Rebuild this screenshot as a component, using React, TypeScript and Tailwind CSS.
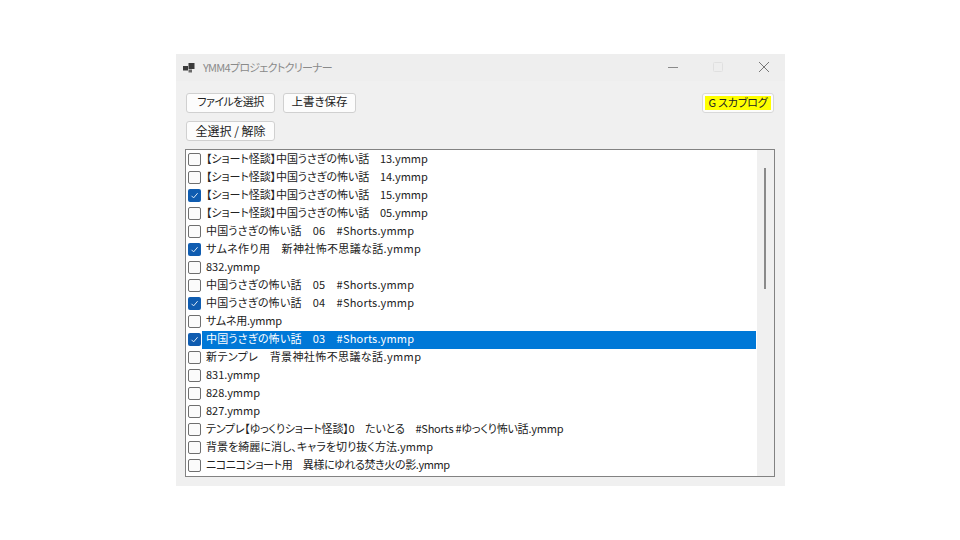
const rows: [string, boolean, string, boolean?][] = [
  ["【ショート怪談】中国うさぎの怖い話　13.ymmp", false, "tracking-[-0.08px]"],
  ["【ショート怪談】中国うさぎの怖い話　14.ymmp", false, "tracking-[-0.08px]"],
  ["【ショート怪談】中国うさぎの怖い話　15.ymmp", true, "tracking-[-0.08px]"],
  ["【ショート怪談】中国うさぎの怖い話　05.ymmp", false, "tracking-[-0.08px]"],
  ["中国うさぎの怖い話　06　#Shorts.ymmp", false, "tracking-[0.2px]"],
  ["サムネ作り用　新神社怖不思議な話.ymmp", true, "tracking-[0.35px]"],
  ["832.ymmp", false, "tracking-normal"],
  ["中国うさぎの怖い話　05　#Shorts.ymmp", false, "tracking-[0.2px]"],
  ["中国うさぎの怖い話　04　#Shorts.ymmp", true, "tracking-[0.2px]"],
  ["サムネ用.ymmp", false, "tracking-[-0.25px]"],
  ["中国うさぎの怖い話　03　#Shorts.ymmp", true, "tracking-[0.2px]", true],
  ["新テンプレ　背景神社怖不思議な話.ymmp", false, "tracking-[0.4px]"],
  ["831.ymmp", false, "tracking-normal"],
  ["828.ymmp", false, "tracking-normal"],
  ["827.ymmp", false, "tracking-normal"],
  ["テンプレ【ゆっくりショート怪談】0　たいとる　#Shorts #ゆっくり怖い話.ymmp", false, "tracking-[-0.22px]"],
  ["背景を綺麗に消し、キャラを切り抜く方法.ymmp", false, "tracking-[0.04px]"],
  ["ニコニコショート用　異様にゆれる焚き火の影.ymmp", false, "tracking-[-0.4px]"],
];

function Check({ on }: { on: boolean }) {
  return on ? (
    <span className="mt-[2px] flex h-[13px] w-[13px] shrink-0 items-center justify-center rounded-[2px] bg-[#0f5cb0]">
      <svg width="9" height="9" viewBox="0 0 9 9" fill="none" stroke="#dce9f7" strokeWidth="1">
        <path d="M1.5 4.8 3.6 6.9 7.6 2.2" />
      </svg>
    </span>
  ) : (
    <span className="mt-[2px] h-[13px] w-[13px] shrink-0 rounded-[2px] border border-[#6f6f6f] bg-[#fbfbfb]" />
  );
}

function Btn({ label, cls }: { label: string; cls: string }) {
  return (
    <button className={`flex h-[20px] items-center justify-center rounded-[3px] border border-[#d0d0d0] bg-[#fcfcfc] text-[#222] ${cls}`}>
      {label}
    </button>
  );
}

export default function App() {
  return (
    <div
      className="h-[540px] w-[960px] overflow-hidden bg-white pl-[176px] pt-[54px] [font-feature-settings:'palt'] leading-none"
      style={{ fontFamily: '"Noto Sans CJK JP", "Noto Sans", sans-serif' }}
    >
      <div className="flex h-[432px] w-[609px] flex-col overflow-hidden bg-[#f0f0f0]">
        <div className="flex h-[27px] shrink-0 items-center bg-[#eeeeee] pl-[7px]">
          <svg width="12" height="12" viewBox="0 0 12 12" className="shrink-0" fill="#3a3a3a">
            <rect x="0" y="4" width="5" height="4.5" />
            <rect x="5.5" y="1" width="6" height="6" />
            <rect x="5.5" y="7.5" width="3.5" height="3" fill="#6a6a6a" />
          </svg>
          <span className="ml-[8px] text-[11px] tracking-[-0.72px] text-[#8a8a8a]">YMM4プロジェクトクリーナー</span>
          <div className="ml-auto flex items-center pr-[15px]">
            <svg width="12" height="12" viewBox="0 0 12 12" stroke="#8a8a8a" strokeWidth="1" fill="none" className="-translate-y-px">
              <path d="M1 6.5h10" />
            </svg>
            <svg width="10" height="10" viewBox="0 0 10 10" stroke="#e0e0e0" strokeWidth="1" fill="none" className="ml-[34px] -translate-y-px">
              <rect x="0.5" y="0.5" width="9" height="9" rx="1" />
            </svg>
            <svg width="12" height="12" viewBox="0 0 12 12" stroke="#777" strokeWidth="1" fill="none" className="ml-[35px] -translate-y-px">
              <path d="M1 1l10 10M11 1 1 11" />
            </svg>
          </div>
        </div>
        <div className="flex flex-col gap-[8px] pl-[10px] pr-[11px] pt-[12px]">
          <div className="flex items-center gap-[8px]">
            <Btn label="ファイルを選択" cls="w-[89px] pb-[3px] text-[11px] tracking-[-0.55px]" />
            <Btn label="上書き保存" cls="w-[73px] pb-[2px] text-[11.5px]" />
            <button className="ml-auto flex h-[20px] w-[72px] items-center justify-center rounded-[3px] border border-[#d8d8d8] bg-[#fcfcfc] p-[2px] text-[11px] tracking-[-0.2px] text-[#222]">
              <span className="flex h-full w-full items-center justify-center bg-[#ffff00] pb-px">G スカブログ</span>
            </button>
          </div>
          <Btn label="全選択 / 解除" cls="w-[89px] pb-px text-[12px]" />
        </div>
        <div className="ml-[9px] mt-[8px] flex h-[328px] w-[590px] border border-[#828282] bg-white">
          <div className="flex min-w-0 flex-1 flex-col pr-px pt-px">
            {rows.map(([t, on, track, sel], i) => (
              <div key={i} className="flex h-[18px] shrink-0 items-start pl-[2px]">
                <Check on={on} />
                <span
                  className={`ml-px flex h-[18px] flex-1 items-center whitespace-pre pb-[4px] pl-[4px] text-[11px] ${track} ${
                    sel ? "bg-[#0078d7] text-white" : "text-[#222]"
                  }`}
                >
                  {t}
                </span>
              </div>
            ))}
          </div>
          <div className="w-[17px] shrink-0 bg-[#f0f0f0] pl-[7px] pt-[18px]">
            <div className="h-[121px] w-[2px] bg-[#8a8a8a]" />
          </div>
        </div>
      </div>
    </div>
  );
}
